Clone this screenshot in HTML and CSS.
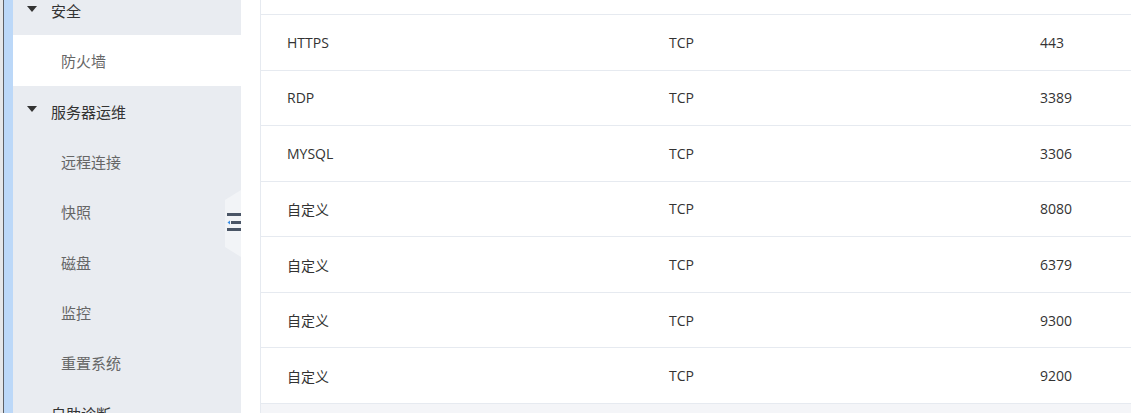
FILE: index.html
```html
<!DOCTYPE html>
<html lang="zh">
<head>
<meta charset="utf-8">
<link rel="stylesheet" href="styles.css">
</head>
<body>
<div class="page">
  <div class="edge"><span class="edge-grey"></span><span class="edge-dark"></span><span class="edge-blue"></span></div>
  <aside class="sidebar">
    <div class="menu">
      <div class="group first"><span class="caret"></span>安全</div>
      <div class="item active">防火墙</div>
      <div class="group"><span class="caret"></span>服务器运维</div>
      <div class="item">远程连接</div>
      <div class="item">快照</div>
      <div class="item">磁盘</div>
      <div class="item">监控</div>
      <div class="item">重置系统</div>
      <div class="group plain">自助诊断</div>
    </div>
    <div class="collapse">
      <svg class="collapse-icon" width="16" height="19" viewBox="0 0 16 19">
        <rect x="0" y="0" width="16" height="3" fill="#4a5566"/>
        <rect x="4" y="8" width="12" height="3" fill="#4a5566"/>
        <path d="M0.5 9.5 L3 7.5 L3 11.5 Z" fill="#3a8ee6"/>
        <rect x="0" y="15" width="16" height="3" fill="#4a5566"/>
      </svg>
    </div>
  </aside>
  <div class="gutter"></div>
  <main class="main">
    <div class="head"></div>
    <div class="row"><div class="cell">HTTPS</div><div class="cell">TCP</div><div class="cell">443</div></div>
    <div class="row"><div class="cell">RDP</div><div class="cell">TCP</div><div class="cell">3389</div></div>
    <div class="row"><div class="cell">MYSQL</div><div class="cell">TCP</div><div class="cell">3306</div></div>
    <div class="row"><div class="cell">自定义</div><div class="cell">TCP</div><div class="cell">8080</div></div>
    <div class="row"><div class="cell">自定义</div><div class="cell">TCP</div><div class="cell">6379</div></div>
    <div class="row"><div class="cell">自定义</div><div class="cell">TCP</div><div class="cell">9300</div></div>
    <div class="row"><div class="cell">自定义</div><div class="cell">TCP</div><div class="cell">9200</div></div>
    <div class="foot"></div>
  </main>
</div>
</body>
</html>
```
FILE: styles.css
```css
* { box-sizing: border-box; }
html, body { margin: 0; padding: 0; background: #fff; }
body {
  font-family: "Open Sans", "Noto Sans CJK SC", sans-serif;
  color: #333;
}
.page {
  display: flex;
  width: 1131px;
  height: 413px;
  overflow: hidden;
}
.edge { display: flex; flex: 0 0 auto; }
.edge-grey { width: 3px; background: #e6e7e9; }
.edge-dark { width: 1px; background: #5d6066; }
.edge-blue { width: 9px; background: #bcd8f8; }

.sidebar {
  position: relative;
  flex: 0 0 228px;
  background: #e9ecf1;
  overflow: hidden;
}
.menu { margin-top: -15px; }
.group, .item {
  display: flex;
  align-items: center;
  height: 50.3px;
  font-family: "Noto Sans CJK SC", sans-serif;
  font-size: 15px;
  padding-top: 1px;
}
.group { color: #333; padding-left: 14px; }
.group.plain { padding-left: 38px; }
.caret {
  width: 0; height: 0;
  border-left: 5px solid transparent;
  border-right: 5px solid transparent;
  border-top: 6px solid #333;
  margin-right: 14px;
  margin-top: -4px;
}
.item { color: #666; padding-left: 48px; }
.item.active { background: #fff; }

.collapse {
  position: absolute;
  left: 212px;
  top: 190px;
  width: 16px;
  height: 67px;
  background: #f2f4f7;
  clip-path: polygon(100% 0, 100% 100%, 0 85%, 0 15%);
}
.collapse-icon { position: absolute; left: 2px; top: 23px; }

.gutter {
  flex: 0 0 20px;
  background: #fff;
  border-right: 1px solid #e6eaf0;
}
.main {
  flex: 1 1 auto;
  display: flex;
  flex-direction: column;
  background: #fff;
}
.head { height: 14px; flex: 0 0 14px; }
.row {
  display: grid;
  grid-template-columns: 382px 371px 1fr;
  height: 55.57px;
  flex: 0 0 55.57px;
  border-top: 1px solid #e6eaf0;
  align-items: center;
}
.cell {
  padding-left: 26px;
  font-size: 14px;
  color: #333;
}
.foot {
  flex: 1 1 auto;
  border-top: 1px solid #e6eaf0;
  background: #f4f5f8;
}
```
